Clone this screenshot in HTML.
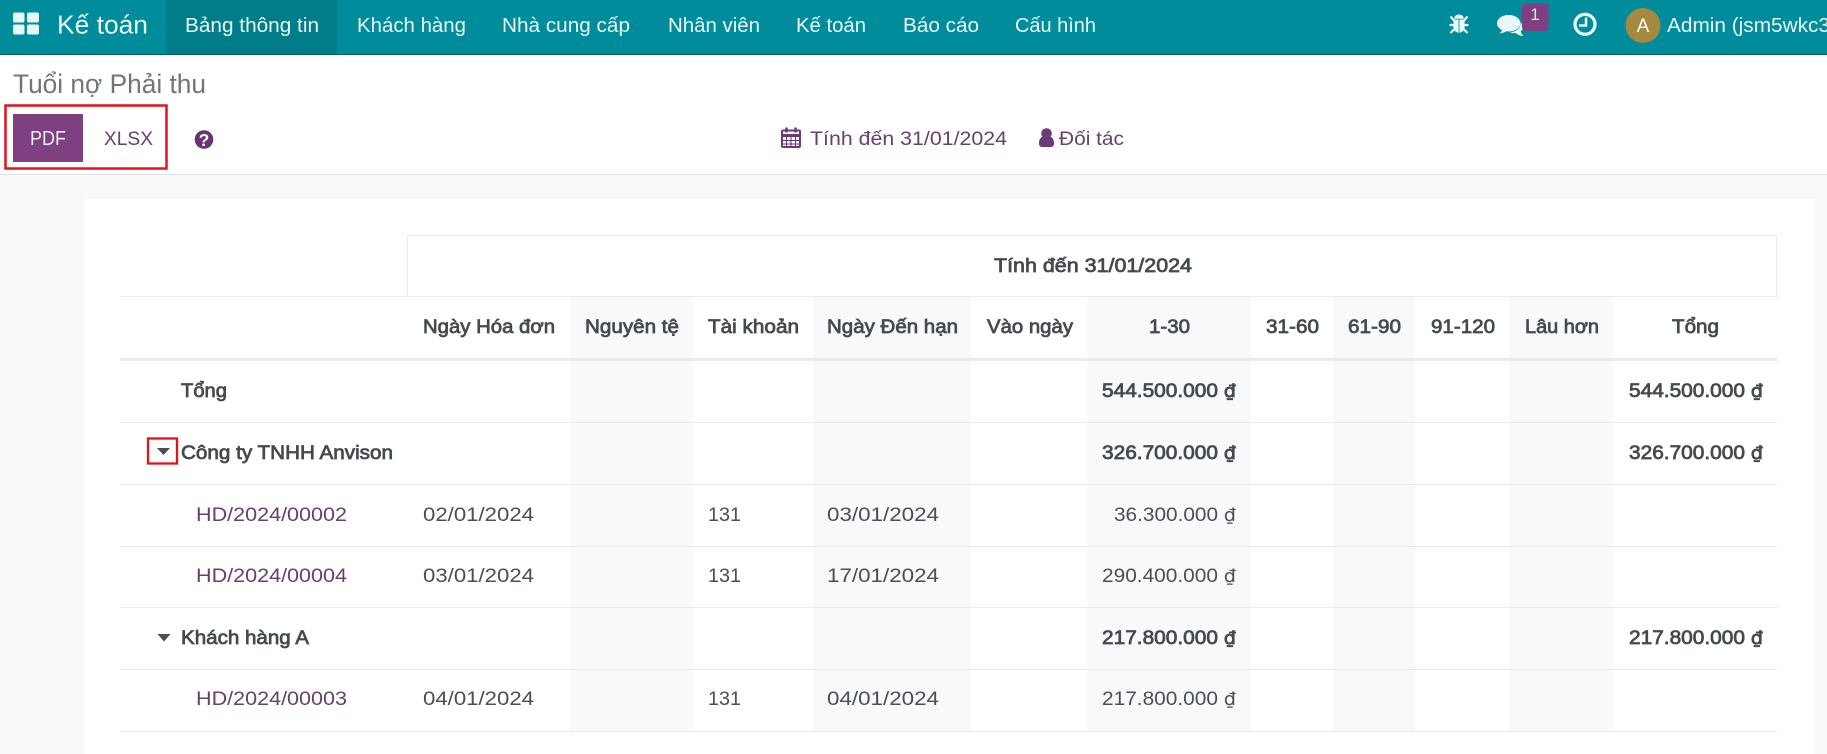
<!DOCTYPE html>
<html lang="vi">
<head>
<meta charset="utf-8">
<title>Tuổi nợ Phải thu</title>
<style>
html,body{margin:0;padding:0;width:1827px;height:754px;overflow:hidden;background:#f8f9fa}
svg{display:block}
text{font-family:"Liberation Sans",Arial,sans-serif}
.n{font-size:20px;fill:#e8f7f8}
.t{font-size:19.5px;fill:#4a4f55}
.b{font-size:19.5px;fill:#454a50;stroke:#454a50;stroke-width:.75px}
.p{font-size:19.5px;fill:#67406c}
.d{font-family:"DejaVu Sans",sans-serif;font-size:18px}
.l{fill:#e9ecef}
.g{fill:#f8f9fa}
</style>
</head>
<body>
<svg xmlns="http://www.w3.org/2000/svg" width="1827" height="754" viewBox="0 0 1827 754">
<!-- nav -->
<rect x="0" y="0" width="1827" height="54" fill="#018c9b"/>
<rect x="0" y="54" width="1827" height="1" fill="#05606b"/>
<rect x="166" y="0" width="171" height="54" fill="#017d8a"/>
<g fill="#e8f7f8">
<rect x="13" y="12.500" width="11.500" height="10" rx="2"/><rect x="27" y="12.500" width="12" height="10" rx="2"/>
<rect x="13" y="24.500" width="11.500" height="10" rx="2"/><rect x="27" y="24.500" width="12" height="10" rx="2"/>
</g>
<text x="57" y="33.500" font-size="26" fill="#e8f7f8" textLength="91" lengthAdjust="spacingAndGlyphs">Kế toán</text>
<text class="n" x="185" y="32" textLength="134" lengthAdjust="spacingAndGlyphs">Bảng thông tin</text>
<text class="n" x="357" y="32" textLength="109" lengthAdjust="spacingAndGlyphs">Khách hàng</text>
<text class="n" x="502" y="32" textLength="128" lengthAdjust="spacingAndGlyphs">Nhà cung cấp</text>
<text class="n" x="668" y="32" textLength="92" lengthAdjust="spacingAndGlyphs">Nhân viên</text>
<text class="n" x="796" y="32" textLength="70" lengthAdjust="spacingAndGlyphs">Kế toán</text>
<text class="n" x="903" y="32" textLength="76" lengthAdjust="spacingAndGlyphs">Báo cáo</text>
<text class="n" x="1015" y="32" textLength="81" lengthAdjust="spacingAndGlyphs">Cấu hình</text>
<!-- bug -->
<g fill="#e8f7f8" stroke="#e8f7f8">
<path d="M1459 14.500c3 0 4.800 1.800 4.800 4.300h-9.600c0-2.500 1.800-4.300 4.800-4.300z" stroke="none"/>
<path d="M1453.500 19.500h5.100v13.300c-3.200-.4-5.300-2.800-5.300-6.300z" stroke="none"/>
<path d="M1459.400 19.500h5.100l.2 7c0 3.500-2.100 5.900-5.300 6.300z" stroke="none"/>
<path d="M1450.500 16.500l4 4.500M1467.500 16.500l-4 4.500M1449.500 25h5M1468.500 25h-5M1450.500 33l4-4M1467.500 33l-4-4" stroke-width="2.200" fill="none"/>
</g>
<!-- chat -->
<path d="M1515 20c4.500.5 8 3.700 8 7 0 1.800-.9 3.200-2.200 4.300.3 1.800 1.200 3.600 2.700 4.700-3 0-5.700-1.200-7.500-2.900-3 .3-6.200-.3-8-1.600z" fill="#e8f7f8"/>
<ellipse cx="1508.500" cy="23.300" rx="12.300" ry="9.200" fill="#018c9b"/>
<path d="M1508.500 15c-6.300 0-11.500 3.700-11.500 8.300 0 2.900 2 5.300 5 6.800-.5 1.200-1.300 2.300-2.500 3.200 2.700 0 5.100-1 6.800-2 .9.100 1.700.200 2.700.200 6.300 0 11.500-3.700 11.500-8.200 0-4.600-5.200-8.300-11.500-8.300z" fill="#e8f7f8"/>
<rect x="1522" y="3.500" width="26.500" height="27.500" rx="4" fill="#7e4080"/>
<text x="1535" y="20" font-size="17" fill="#e8e0ea" text-anchor="middle">1</text>
<!-- clock -->
<circle cx="1585" cy="24.300" r="10" fill="none" stroke="#e8f7f8" stroke-width="3.300"/>
<path d="M1586 17.500v8h-7" fill="none" stroke="#e8f7f8" stroke-width="2.500"/>
<!-- avatar -->
<circle cx="1643" cy="25.500" r="17.500" fill="#a5893f"/>
<text x="1643" y="32" font-size="19" fill="#fff" text-anchor="middle">A</text>
<text class="n" x="1667" y="32" textLength="163" lengthAdjust="spacingAndGlyphs">Admin (jsm5wkc3</text>

<!-- control panel -->
<rect x="0" y="55" width="1827" height="119" fill="#fff"/>
<rect x="0" y="174" width="1827" height="1" fill="#dfe2e6"/>
<text x="13" y="93" font-size="26.500" fill="#6f757b" textLength="193" lengthAdjust="spacingAndGlyphs">Tuổi nợ Phải thu</text>
<rect x="13" y="114" width="70" height="48" fill="#7e4080"/>
<text x="30" y="145" font-size="20" fill="#f3edf4" textLength="36" lengthAdjust="spacingAndGlyphs">PDF</text>
<text class="p" x="104" y="145" textLength="49" lengthAdjust="spacingAndGlyphs">XLSX</text>
<rect x="5.500" y="105.500" width="161" height="63" fill="none" stroke="#e2131b" stroke-width="2.500"/>
<circle cx="204" cy="139.500" r="9.300" fill="#67356f"/>
<text x="204" y="145.800" font-size="17.500" font-weight="bold" fill="#fff" text-anchor="middle">?</text>
<!-- calendar -->
<g fill="none" stroke="#6b3a78">
<rect x="782" y="130.500" width="18" height="16.500" rx="1" stroke-width="2"/>
<path d="M782 135.500h18" stroke-width="3"/>
<path d="M786.500 136v11M791 136v11M795.500 136v11M782 140.500h18M782 144h18" stroke-width="1.100"/>
<path d="M786.500 127.500v5M795.500 127.500v5" stroke-width="2.500"/>
</g>
<text class="p" x="810" y="145" textLength="197" lengthAdjust="spacingAndGlyphs">Tính đến 31/01/2024</text>
<!-- user -->
<circle cx="1046.500" cy="133.500" r="5.300" fill="#6b3a78"/>
<path d="M1039 143.500c0-4 1.600-6.800 4.300-6.800 1.900 1.500 4.500 1.500 6.400 0 2.700 0 4.300 2.800 4.300 6.800 0 2.300-1.300 3.500-3.200 3.500h-8.600c-1.900 0-3.200-1.200-3.200-3.500z" fill="#6b3a78"/>
<text class="p" x="1059" y="145" textLength="65" lengthAdjust="spacingAndGlyphs">Đối tác</text>

<!-- card -->
<rect x="84" y="199" width="1731" height="555" fill="#fff"/>
<!-- shaded columns -->
<rect class="g" x="570" y="296" width="123" height="435"/>
<rect class="g" x="813" y="296" width="158" height="435"/>
<rect class="g" x="1087" y="296" width="164" height="435"/>
<rect class="g" x="1333" y="296" width="82" height="435"/>
<rect class="g" x="1509" y="296" width="104" height="435"/>
<!-- lines -->
<rect class="l" x="407" y="235" width="1370" height="1"/>
<rect class="l" x="407" y="235" width="1" height="61"/>
<rect class="l" x="1776" y="235" width="1" height="61"/>
<rect class="l" x="120" y="296" width="1657" height="1"/>
<rect x="120" y="358" width="1657" height="3" fill="#e9ecef"/>
<rect class="l" x="120" y="422" width="1657" height="1"/>
<rect class="l" x="120" y="484" width="1657" height="1"/>
<rect class="l" x="120" y="546" width="1657" height="1"/>
<rect class="l" x="120" y="607" width="1657" height="1"/>
<rect class="l" x="120" y="669" width="1657" height="1"/>
<rect class="l" x="120" y="731" width="1657" height="1"/>

<!-- header -->
<text class="b" x="994" y="272" textLength="198" lengthAdjust="spacingAndGlyphs">Tính đến 31/01/2024</text>
<text class="b" x="423" y="333" textLength="132" lengthAdjust="spacingAndGlyphs">Ngày Hóa đơn</text>
<text class="b" x="585" y="333" textLength="94" lengthAdjust="spacingAndGlyphs">Nguyên tệ</text>
<text class="b" x="708" y="333" textLength="91" lengthAdjust="spacingAndGlyphs">Tài khoản</text>
<text class="b" x="827" y="333" textLength="131" lengthAdjust="spacingAndGlyphs">Ngày Đến hạn</text>
<text class="b" x="987" y="333" textLength="86" lengthAdjust="spacingAndGlyphs">Vào ngày</text>
<text class="b" x="1149" y="333" textLength="41" lengthAdjust="spacingAndGlyphs">1-30</text>
<text class="b" x="1266" y="333" textLength="53" lengthAdjust="spacingAndGlyphs">31-60</text>
<text class="b" x="1348" y="333" textLength="53" lengthAdjust="spacingAndGlyphs">61-90</text>
<text class="b" x="1431" y="333" textLength="64" lengthAdjust="spacingAndGlyphs">91-120</text>
<text class="b" x="1525" y="333" textLength="74" lengthAdjust="spacingAndGlyphs">Lâu hơn</text>
<text class="b" x="1672" y="333" textLength="47" lengthAdjust="spacingAndGlyphs">Tổng</text>

<!-- Tổng -->
<text class="b" x="181" y="397" textLength="46" lengthAdjust="spacingAndGlyphs">Tổng</text>
<text class="b" x="1102" y="397" textLength="134" lengthAdjust="spacingAndGlyphs">544.500.000 <tspan class="d">₫</tspan></text>
<text class="b" x="1629" y="397" textLength="134" lengthAdjust="spacingAndGlyphs">544.500.000 <tspan class="d">₫</tspan></text>

<!-- Anvison -->
<path d="M157 448h13l-6.500 7z" fill="#4a4f55"/>
<rect x="148" y="438.500" width="29" height="25" fill="none" stroke="#e2131b" stroke-width="2.300"/>
<text class="b" x="181" y="459" textLength="212" lengthAdjust="spacingAndGlyphs">Công ty TNHH Anvison</text>
<text class="b" x="1102" y="459" textLength="134" lengthAdjust="spacingAndGlyphs">326.700.000 <tspan class="d">₫</tspan></text>
<text class="b" x="1629" y="459" textLength="134" lengthAdjust="spacingAndGlyphs">326.700.000 <tspan class="d">₫</tspan></text>

<!-- HD 2 -->
<text class="p" x="196" y="521" textLength="151" lengthAdjust="spacingAndGlyphs">HD/2024/00002</text>
<text class="t" x="423" y="521" textLength="111" lengthAdjust="spacingAndGlyphs">02/01/2024</text>
<text class="t" x="708" y="521" textLength="33" lengthAdjust="spacingAndGlyphs">131</text>
<text class="t" x="827" y="521" textLength="112" lengthAdjust="spacingAndGlyphs">03/01/2024</text>
<text class="t" x="1114" y="521" textLength="122" lengthAdjust="spacingAndGlyphs">36.300.000 <tspan class="d">₫</tspan></text>

<!-- HD 4 -->
<text class="p" x="196" y="582" textLength="151" lengthAdjust="spacingAndGlyphs">HD/2024/00004</text>
<text class="t" x="423" y="582" textLength="111" lengthAdjust="spacingAndGlyphs">03/01/2024</text>
<text class="t" x="708" y="582" textLength="33" lengthAdjust="spacingAndGlyphs">131</text>
<text class="t" x="827" y="582" textLength="112" lengthAdjust="spacingAndGlyphs">17/01/2024</text>
<text class="t" x="1102" y="582" textLength="134" lengthAdjust="spacingAndGlyphs">290.400.000 <tspan class="d">₫</tspan></text>

<!-- Khách hàng A -->
<path d="M157.500 634h13l-6.500 7.500z" fill="#4a4f55"/>
<text class="b" x="181" y="644" textLength="128" lengthAdjust="spacingAndGlyphs">Khách hàng A</text>
<text class="b" x="1102" y="644" textLength="134" lengthAdjust="spacingAndGlyphs">217.800.000 <tspan class="d">₫</tspan></text>
<text class="b" x="1629" y="644" textLength="134" lengthAdjust="spacingAndGlyphs">217.800.000 <tspan class="d">₫</tspan></text>

<!-- HD 3 -->
<text class="p" x="196" y="705" textLength="151" lengthAdjust="spacingAndGlyphs">HD/2024/00003</text>
<text class="t" x="423" y="705" textLength="111" lengthAdjust="spacingAndGlyphs">04/01/2024</text>
<text class="t" x="708" y="705" textLength="33" lengthAdjust="spacingAndGlyphs">131</text>
<text class="t" x="827" y="705" textLength="112" lengthAdjust="spacingAndGlyphs">04/01/2024</text>
<text class="t" x="1102" y="705" textLength="134" lengthAdjust="spacingAndGlyphs">217.800.000 <tspan class="d">₫</tspan></text>
</svg>
</body>
</html>
